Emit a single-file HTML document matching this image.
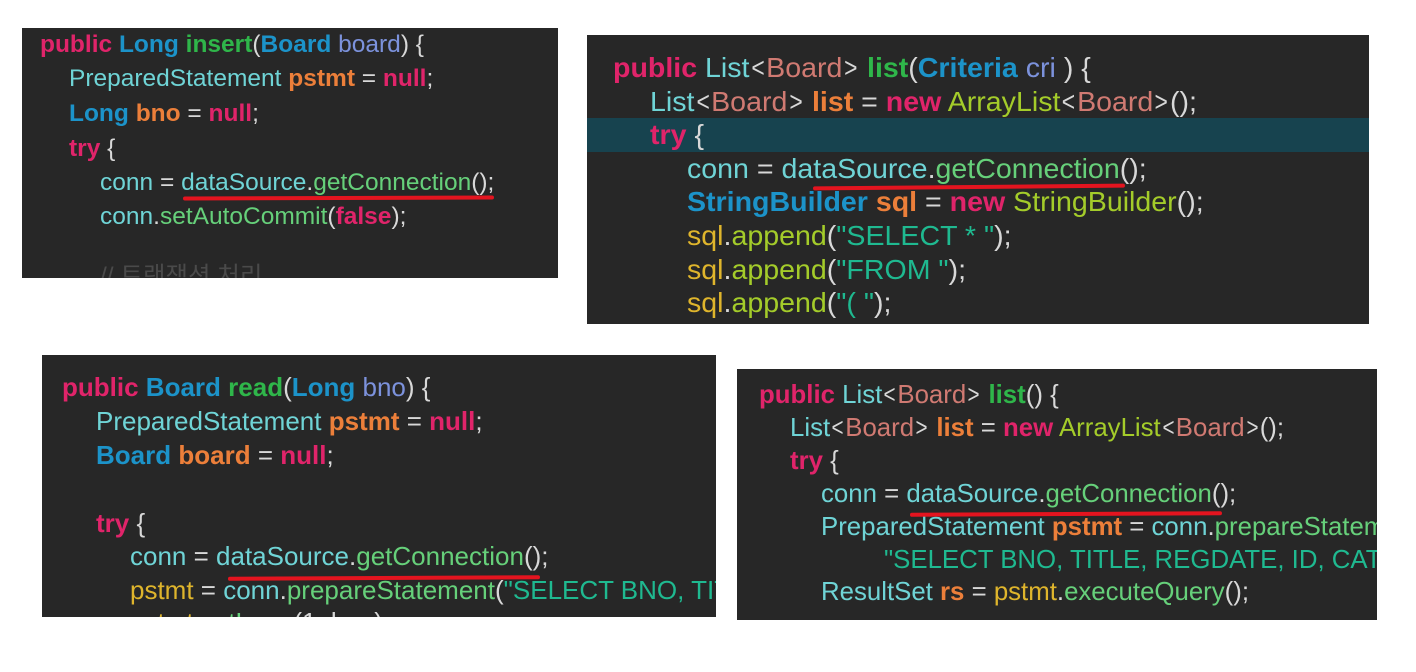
<!DOCTYPE html>
<html><head><meta charset="utf-8"><style>
html,body{margin:0;padding:0;background:#fff;width:1416px;height:672px;overflow:hidden;position:relative}
.p{position:absolute;background:#272727;overflow:hidden}
.l{position:absolute;white-space:pre;line-height:34px;height:34px;font-family:"Liberation Sans","Noto Sans CJK KR",sans-serif;color:#d8d8d8;transform-origin:left center}
.k{color:#e0246a;font-weight:bold}
.t{color:#1c93c9;font-weight:bold}
.f{color:#2fb64a;font-weight:bold}
.pa{color:#7c92dc}
.c{color:#6fd4d6}
.o{color:#ec7f3a;font-weight:bold}
.g{color:#66d07a}
.s{color:#1fb990}
.y{color:#dfb52c}
.lm{color:#a4cc2a}
.b{color:#d07a72}
.w{color:#d8d8d8}
.a{color:#d8d8d8;display:inline-block;transform:scaleX(0.8)}
.u{position:absolute;height:4px;background:#e4141f;border-radius:2px}
.p1 .l{font-size:24.5px}
.p2 .l{font-size:28px;transform:scaleX(1.02)}
.p3 .l{font-size:26px}
.p4 .l{font-size:25.8px}
</style></head><body>

<div class="p p1" style="left:22px;top:28px;width:536px;height:250px">
<div class="l" style="left:18px;top:0px"><span class="k">public</span> <span class="t">Long</span> <span class="f">insert</span>(<span class="t">Board</span> <span class="pa">board</span>) {</div>
<div class="l" style="left:47px;top:34px"><span class="c">PreparedStatement</span> <span class="o">pstmt</span> = <span class="k">null</span>;</div>
<div class="l" style="left:47px;top:69px"><span class="t">Long</span> <span class="o">bno</span> = <span class="k">null</span>;</div>
<div class="l" style="left:47px;top:104px"><span class="k">try</span> {</div>
<div class="l" style="left:78px;top:138px"><span class="c">conn</span> = <span class="c">dataSource</span>.<span class="g">getConnection</span>();</div>
<div class="l" style="left:78px;top:172px"><span class="c">conn</span>.<span class="g">setAutoCommit</span>(<span class="k">false</span>);</div>
<div class="l" style="left:78px;top:232px;color:#4a4a4a">// 트랜잭션 처리</div>
</div>

<div class="p p2" style="left:587px;top:35px;width:782px;height:289px">
<div style="position:absolute;left:0;top:83px;width:782px;height:34px;background:#17434f"></div>
<div class="l" style="left:26px;top:16px"><span class="k">public</span> <span class="c">List</span><span class="a">&lt;</span><span class="b">Board</span><span class="a">&gt;</span> <span class="f">list</span>(<span class="t">Criteria</span> <span class="pa">cri</span> ) {</div>
<div class="l" style="left:63px;top:50px"><span class="c">List</span><span class="a">&lt;</span><span class="b">Board</span><span class="a">&gt;</span> <span class="o">list</span> = <span class="k">new</span> <span class="lm">ArrayList</span><span class="a">&lt;</span><span class="b">Board</span><span class="a">&gt;</span>();</div>
<div class="l" style="left:63px;top:83px"><span class="k">try</span> {</div>
<div class="l" style="left:100px;top:117px"><span class="c">conn</span> = <span class="c">dataSource</span>.<span class="g">getConnection</span>();</div>
<div class="l" style="left:100px;top:150px"><span class="t">StringBuilder</span> <span class="o">sql</span> = <span class="k">new</span> <span class="lm">StringBuilder</span>();</div>
<div class="l" style="left:100px;top:184px"><span class="y">sql</span>.<span class="lm">append</span>(<span class="s">"SELECT * "</span>);</div>
<div class="l" style="left:100px;top:218px"><span class="y">sql</span>.<span class="lm">append</span>(<span class="s">"FROM "</span>);</div>
<div class="l" style="left:100px;top:251px"><span class="y">sql</span>.<span class="lm">append</span>(<span class="s">"( "</span>);</div>
</div>

<div class="p p3" style="left:42px;top:355px;width:674px;height:262px">
<div class="l" style="left:20px;top:15px"><span class="k">public</span> <span class="t">Board</span> <span class="f">read</span>(<span class="t">Long</span> <span class="pa">bno</span>) {</div>
<div class="l" style="left:54px;top:49px"><span class="c">PreparedStatement</span> <span class="o">pstmt</span> = <span class="k">null</span>;</div>
<div class="l" style="left:54px;top:83px"><span class="t">Board</span> <span class="o">board</span> = <span class="k">null</span>;</div>
<div class="l" style="left:54px;top:151px"><span class="k">try</span> {</div>
<div class="l" style="left:88px;top:184px"><span class="c">conn</span> = <span class="c">dataSource</span>.<span class="g">getConnection</span>();</div>
<div class="l" style="left:88px;top:218px"><span class="y">pstmt</span> = <span class="c">conn</span>.<span class="g">prepareStatement</span>(<span class="s">"SELECT BNO, TITLE</span></div>
<div class="l" style="left:88px;top:250px"><span class="y">pstmt</span>.<span class="g">setLong</span>(1, bno);</div>
</div>

<div class="p p4" style="left:737px;top:369px;width:640px;height:251px">
<div class="l" style="left:22px;top:9px"><span class="k">public</span> <span class="c">List</span><span class="a">&lt;</span><span class="b">Board</span><span class="a">&gt;</span> <span class="f">list</span>() {</div>
<div class="l" style="left:53px;top:42px"><span class="c">List</span><span class="a">&lt;</span><span class="b">Board</span><span class="a">&gt;</span> <span class="o">list</span> = <span class="k">new</span> <span class="lm">ArrayList</span><span class="a">&lt;</span><span class="b">Board</span><span class="a">&gt;</span>();</div>
<div class="l" style="left:53px;top:75px"><span class="k">try</span> {</div>
<div class="l" style="left:84px;top:108px"><span class="c">conn</span> = <span class="c">dataSource</span>.<span class="g">getConnection</span>();</div>
<div class="l" style="left:84px;top:141px"><span class="c">PreparedStatement</span> <span class="o">pstmt</span> = <span class="c">conn</span>.<span class="g">prepareStatement</span>(</div>
<div class="l" style="left:147px;top:174px"><span class="s">"SELECT BNO, TITLE, REGDATE, ID, CATEGORY"</span></div>
<div class="l" style="left:84px;top:206px"><span class="c">ResultSet</span> <span class="o">rs</span> = <span class="y">pstmt</span>.<span class="g">executeQuery</span>();</div>
</div>

<div class="u" style="left:183px;top:196px;width:311px;transform:rotate(-0.2deg)"></div>
<div class="u" style="left:813px;top:185px;width:312px;transform:rotate(-0.5deg)"></div>
<div class="u" style="left:228px;top:576px;width:312px;transform:rotate(-0.3deg)"></div>
<div class="u" style="left:910px;top:512px;width:312px;transform:rotate(-0.3deg)"></div>
</body></html>
